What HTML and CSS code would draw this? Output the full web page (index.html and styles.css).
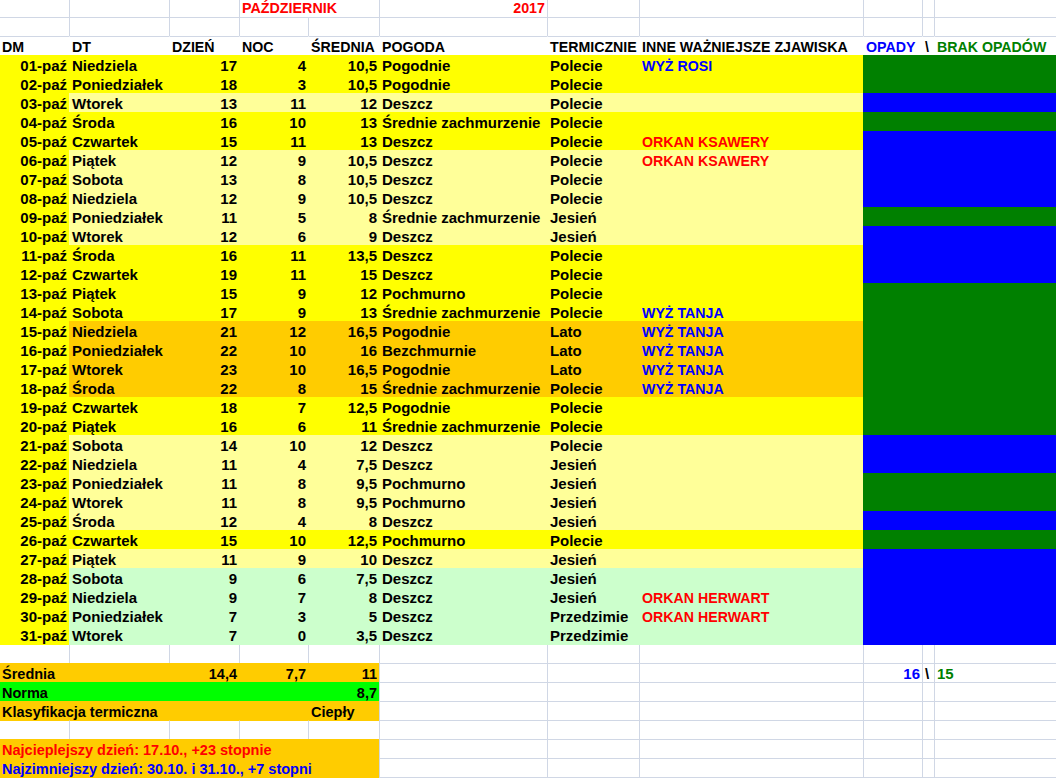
FILE: index.html
```html
<!DOCTYPE html>
<html lang="pl">
<head>
<meta charset="utf-8">
<title>Październik 2017</title>
<link rel="stylesheet" href="styles.css">
</head>
<body>
<div class="sheet">
  <div class="r top">
    <div class="c g"></div><div class="c g"></div><div class="c g"></div>
    <div class="c g span2 k red">PAŹDZIERNIK</div>
    <div class="c g n k red">2017</div>
    <div class="c g"></div><div class="c g"></div><div class="c g"></div><div class="c g"></div><div class="c g"></div>
  </div>
  <div class="r">
    <div class="c g"></div><div class="c g"></div><div class="c g"></div><div class="c g"></div><div class="c g"></div><div class="c g"></div><div class="c g"></div><div class="c g"></div><div class="c g"></div><div class="c g"></div><div class="c g"></div>
  </div>
  <div class="r hdr">
    <div class="c">DM</div><div class="c">DT</div><div class="c">DZIEŃ</div><div class="c">NOC</div><div class="c">ŚREDNIA</div><div class="c">POGODA</div><div class="c clip">TERMICZNIE</div><div class="c">INNE WAŻNIEJSZE ZJAWISKA</div><div class="c blue">OPADY</div><div class="c">\</div><div class="c green">BRAK OPADÓW</div>
  </div>

  <div class="r y"><div class="c dm n">01-paź</div><div class="c">Niedziela</div><div class="c n">17</div><div class="c n">4</div><div class="c n">10,5</div><div class="c">Pogodnie</div><div class="c">Polecie</div><div class="c ev blue">WYŻ ROSI</div><div class="c op-g span3"></div></div>
  <div class="r y"><div class="c dm n">02-paź</div><div class="c">Poniedziałek</div><div class="c n">18</div><div class="c n">3</div><div class="c n">10,5</div><div class="c">Pogodnie</div><div class="c">Polecie</div><div class="c ev"></div><div class="c op-g span3"></div></div>
  <div class="r ly"><div class="c dm n">03-paź</div><div class="c">Wtorek</div><div class="c n">13</div><div class="c n">11</div><div class="c n">12</div><div class="c">Deszcz</div><div class="c">Polecie</div><div class="c ev"></div><div class="c op-b span3"></div></div>
  <div class="r y"><div class="c dm n">04-paź</div><div class="c">Środa</div><div class="c n">16</div><div class="c n">10</div><div class="c n">13</div><div class="c">Średnie zachmurzenie</div><div class="c">Polecie</div><div class="c ev"></div><div class="c op-g span3"></div></div>
  <div class="r y"><div class="c dm n">05-paź</div><div class="c">Czwartek</div><div class="c n">15</div><div class="c n">11</div><div class="c n">13</div><div class="c">Deszcz</div><div class="c">Polecie</div><div class="c ev red">ORKAN KSAWERY</div><div class="c op-b span3"></div></div>
  <div class="r ly"><div class="c dm n">06-paź</div><div class="c">Piątek</div><div class="c n">12</div><div class="c n">9</div><div class="c n">10,5</div><div class="c">Deszcz</div><div class="c">Polecie</div><div class="c ev red">ORKAN KSAWERY</div><div class="c op-b span3"></div></div>
  <div class="r ly"><div class="c dm n">07-paź</div><div class="c">Sobota</div><div class="c n">13</div><div class="c n">8</div><div class="c n">10,5</div><div class="c">Deszcz</div><div class="c">Polecie</div><div class="c ev"></div><div class="c op-b span3"></div></div>
  <div class="r ly"><div class="c dm n">08-paź</div><div class="c">Niedziela</div><div class="c n">12</div><div class="c n">9</div><div class="c n">10,5</div><div class="c">Deszcz</div><div class="c">Polecie</div><div class="c ev"></div><div class="c op-b span3"></div></div>
  <div class="r ly"><div class="c dm n">09-paź</div><div class="c">Poniedziałek</div><div class="c n">11</div><div class="c n">5</div><div class="c n">8</div><div class="c">Średnie zachmurzenie</div><div class="c">Jesień</div><div class="c ev"></div><div class="c op-g span3"></div></div>
  <div class="r ly"><div class="c dm n">10-paź</div><div class="c">Wtorek</div><div class="c n">12</div><div class="c n">6</div><div class="c n">9</div><div class="c">Deszcz</div><div class="c">Jesień</div><div class="c ev"></div><div class="c op-b span3"></div></div>
  <div class="r y"><div class="c dm n">11-paź</div><div class="c">Środa</div><div class="c n">16</div><div class="c n">11</div><div class="c n">13,5</div><div class="c">Deszcz</div><div class="c">Polecie</div><div class="c ev"></div><div class="c op-b span3"></div></div>
  <div class="r y"><div class="c dm n">12-paź</div><div class="c">Czwartek</div><div class="c n">19</div><div class="c n">11</div><div class="c n">15</div><div class="c">Deszcz</div><div class="c">Polecie</div><div class="c ev"></div><div class="c op-b span3"></div></div>
  <div class="r y"><div class="c dm n">13-paź</div><div class="c">Piątek</div><div class="c n">15</div><div class="c n">9</div><div class="c n">12</div><div class="c">Pochmurno</div><div class="c">Polecie</div><div class="c ev"></div><div class="c op-g span3"></div></div>
  <div class="r y"><div class="c dm n">14-paź</div><div class="c">Sobota</div><div class="c n">17</div><div class="c n">9</div><div class="c n">13</div><div class="c">Średnie zachmurzenie</div><div class="c">Polecie</div><div class="c ev blue">WYŻ TANJA</div><div class="c op-g span3"></div></div>
  <div class="r or"><div class="c dm n">15-paź</div><div class="c">Niedziela</div><div class="c n">21</div><div class="c n">12</div><div class="c n">16,5</div><div class="c">Pogodnie</div><div class="c">Lato</div><div class="c ev blue">WYŻ TANJA</div><div class="c op-g span3"></div></div>
  <div class="r or"><div class="c dm n">16-paź</div><div class="c">Poniedziałek</div><div class="c n">22</div><div class="c n">10</div><div class="c n">16</div><div class="c">Bezchmurnie</div><div class="c">Lato</div><div class="c ev blue">WYŻ TANJA</div><div class="c op-g span3"></div></div>
  <div class="r or"><div class="c dm n">17-paź</div><div class="c">Wtorek</div><div class="c n">23</div><div class="c n">10</div><div class="c n">16,5</div><div class="c">Pogodnie</div><div class="c">Lato</div><div class="c ev blue">WYŻ TANJA</div><div class="c op-g span3"></div></div>
  <div class="r or"><div class="c dm n">18-paź</div><div class="c">Środa</div><div class="c n">22</div><div class="c n">8</div><div class="c n">15</div><div class="c">Średnie zachmurzenie</div><div class="c">Polecie</div><div class="c ev blue">WYŻ TANJA</div><div class="c op-g span3"></div></div>
  <div class="r y"><div class="c dm n">19-paź</div><div class="c">Czwartek</div><div class="c n">18</div><div class="c n">7</div><div class="c n">12,5</div><div class="c">Pogodnie</div><div class="c">Polecie</div><div class="c ev"></div><div class="c op-g span3"></div></div>
  <div class="r y"><div class="c dm n">20-paź</div><div class="c">Piątek</div><div class="c n">16</div><div class="c n">6</div><div class="c n">11</div><div class="c">Średnie zachmurzenie</div><div class="c">Polecie</div><div class="c ev"></div><div class="c op-g span3"></div></div>
  <div class="r ly"><div class="c dm n">21-paź</div><div class="c">Sobota</div><div class="c n">14</div><div class="c n">10</div><div class="c n">12</div><div class="c">Deszcz</div><div class="c">Polecie</div><div class="c ev"></div><div class="c op-b span3"></div></div>
  <div class="r ly"><div class="c dm n">22-paź</div><div class="c">Niedziela</div><div class="c n">11</div><div class="c n">4</div><div class="c n">7,5</div><div class="c">Deszcz</div><div class="c">Jesień</div><div class="c ev"></div><div class="c op-b span3"></div></div>
  <div class="r ly"><div class="c dm n">23-paź</div><div class="c">Poniedziałek</div><div class="c n">11</div><div class="c n">8</div><div class="c n">9,5</div><div class="c">Pochmurno</div><div class="c">Jesień</div><div class="c ev"></div><div class="c op-g span3"></div></div>
  <div class="r ly"><div class="c dm n">24-paź</div><div class="c">Wtorek</div><div class="c n">11</div><div class="c n">8</div><div class="c n">9,5</div><div class="c">Pochmurno</div><div class="c">Jesień</div><div class="c ev"></div><div class="c op-g span3"></div></div>
  <div class="r ly"><div class="c dm n">25-paź</div><div class="c">Środa</div><div class="c n">12</div><div class="c n">4</div><div class="c n">8</div><div class="c">Deszcz</div><div class="c">Jesień</div><div class="c ev"></div><div class="c op-b span3"></div></div>
  <div class="r y"><div class="c dm n">26-paź</div><div class="c">Czwartek</div><div class="c n">15</div><div class="c n">10</div><div class="c n">12,5</div><div class="c">Pochmurno</div><div class="c">Polecie</div><div class="c ev"></div><div class="c op-g span3"></div></div>
  <div class="r ly"><div class="c dm n">27-paź</div><div class="c">Piątek</div><div class="c n">11</div><div class="c n">9</div><div class="c n">10</div><div class="c">Deszcz</div><div class="c">Jesień</div><div class="c ev"></div><div class="c op-b span3"></div></div>
  <div class="r lg"><div class="c dm n">28-paź</div><div class="c">Sobota</div><div class="c n">9</div><div class="c n">6</div><div class="c n">7,5</div><div class="c">Deszcz</div><div class="c">Jesień</div><div class="c ev"></div><div class="c op-b span3"></div></div>
  <div class="r lg"><div class="c dm n">29-paź</div><div class="c">Niedziela</div><div class="c n">9</div><div class="c n">7</div><div class="c n">8</div><div class="c">Deszcz</div><div class="c">Jesień</div><div class="c ev red">ORKAN HERWART</div><div class="c op-b span3"></div></div>
  <div class="r lg"><div class="c dm n">30-paź</div><div class="c">Poniedziałek</div><div class="c n">7</div><div class="c n">3</div><div class="c n">5</div><div class="c">Deszcz</div><div class="c">Przedzimie</div><div class="c ev red">ORKAN HERWART</div><div class="c op-b span3"></div></div>
  <div class="r lg last"><div class="c dm n">31-paź</div><div class="c">Wtorek</div><div class="c n">7</div><div class="c n">0</div><div class="c n">3,5</div><div class="c">Deszcz</div><div class="c">Przedzimie</div><div class="c ev"></div><div class="c op-b span3"></div></div>

  <div class="r notop">
    <div class="c g"></div><div class="c g"></div><div class="c g"></div><div class="c g"></div><div class="c g"></div><div class="c g"></div><div class="c g"></div><div class="c g"></div><div class="c g"></div><div class="c g"></div><div class="c g"></div>
  </div>
  <div class="r">
    <div class="c fo span2">Średnia</div><div class="c fo n">14,4</div><div class="c fo n">7,7</div><div class="c fo n">11</div>
    <div class="c g"></div><div class="c g"></div><div class="c g"></div><div class="c g n blue">16</div><div class="c g">\</div><div class="c g green">15</div>
  </div>
  <div class="r">
    <div class="c fg span4">Norma</div><div class="c fg n">8,7</div>
    <div class="c g"></div><div class="c g"></div><div class="c g"></div><div class="c g"></div><div class="c g"></div><div class="c g"></div>
  </div>
  <div class="r">
    <div class="c fo span4">Klasyfikacja termiczna</div><div class="c fo">Ciepły</div>
    <div class="c g"></div><div class="c g"></div><div class="c g"></div><div class="c g"></div><div class="c g"></div><div class="c g"></div>
  </div>
  <div class="r">
    <div class="c g uo"></div><div class="c g uo"></div><div class="c g uo"></div><div class="c g uo"></div><div class="c g uo"></div>
    <div class="c g"></div><div class="c g"></div><div class="c g"></div><div class="c g"></div><div class="c g"></div><div class="c g"></div>
  </div>
  <div class="r">
    <div class="c fo span5 red">Najcieplejszy dzień: 17.10., +23 stopnie</div>
    <div class="c g"></div><div class="c g"></div><div class="c g"></div><div class="c g"></div><div class="c g"></div><div class="c g"></div>
  </div>
  <div class="r">
    <div class="c fo span5 blue">Najzimniejszy dzień: 30.10. i 31.10., +7 stopni</div>
    <div class="c g"></div><div class="c g"></div><div class="c g"></div><div class="c g"></div><div class="c g"></div><div class="c g"></div>
  </div>
  <div class="r">
    <div class="c fo span5"></div>
    <div class="c g"></div><div class="c g"></div><div class="c g"></div><div class="c g"></div><div class="c g"></div><div class="c g"></div>
  </div>
</div>
</body>
</html>
```

FILE: styles.css
```css
html, body {
  margin: 0;
  padding: 0;
}

body {
  width: 1056px;
  height: 778px;
  overflow: hidden;
  background: #ffffff;
  color: #000000;
  font-family: "Liberation Sans", Arial, sans-serif;
  font-weight: 700;
  font-size: 15px;
}

.sheet {
  display: flex;
  flex-direction: column;
}

.r {
  display: grid;
  grid-template-columns: 69px 100px 70px 69px 71px 168px 92px 224px 59px 12px 122px;
  height: 19px;
  flex: none;
}

.c {
  box-sizing: border-box;
  min-width: 0;
  border-top: 1px solid transparent;
  border-left: 1px solid transparent;
  padding: 2px 2px 0 2px;
  line-height: 16px;
  white-space: nowrap;
}

.c:first-child {
  border-left: 0;
}

/* grid lines of empty cells */
.g {
  border-color: #d0d7e5;
}

.uo {
  border-top-color: #ffcc00;
}

.n {
  text-align: right;
}

.k {
  font-size: 14.3px;
}

.clip {
  overflow: hidden;
}

.span2 { grid-column: span 2; }
.span3 { grid-column: span 3; }
.span4 { grid-column: span 4; }
.span5 { grid-column: span 5; }

/* first row */
.top {
  height: 17px;
}

.top .c {
  border-top: 0;
  padding-top: 0;
}

/* header row */
.hdr {
  font-size: 14.2px;
}

.hdr .c {
  border-top-color: #d0d7e5;
}

/* data rows */
.y  { background: #ffff00; }
.ly { background: #ffff99; }
.or { background: #ffcc00; }
.lg { background: #ccffcc; }

.dm { background: #ffff00; }

.op-b { background: #0000ff; }
.op-g { background: #008000; }

.ev {
  font-size: 14.2px;
}

.last {
  height: 20px;
}

.notop {
  height: 18px;
}

.notop .c {
  border-top: 0;
}

/* summary fills */
.fo { background: #ffcc00; }
.fg { background: #00ff00; }

.fo, .fg {
  font-size: 14.5px;
}

/* text colours */
.red   { color: #ff0000; }
.blue  { color: #0000ff; }
.green { color: #008000; }
```
